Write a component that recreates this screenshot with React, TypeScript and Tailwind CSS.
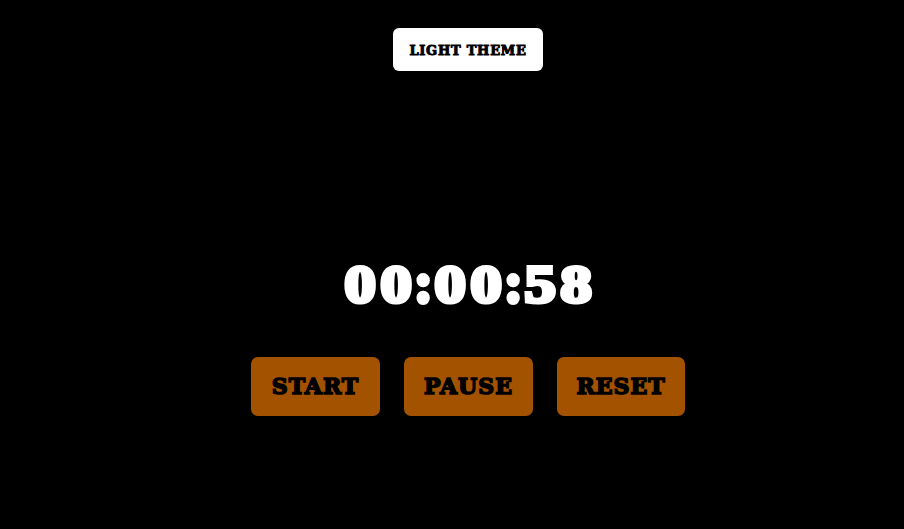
const time = '00:00:58';

function Digit({ char }: { char: string }) {
  if (char === ':') {
    return (
      <span className="flex w-[18px] justify-center text-[56px] [-webkit-text-stroke:5px_white]">
        <span className="inline-block scale-x-95">:</span>
      </span>
    );
  }
  return (
    <span className="flex w-9 justify-center text-[53px] [-webkit-text-stroke:4.2px_white]">
      <span className="inline-block scale-x-[1.18]">{char}</span>
    </span>
  );
}

function Control({ label, width }: { label: string; width: string }) {
  return (
    <button
      className={`${width} flex h-[59px] items-center justify-center rounded-[7px] bg-[#a35200] pb-px text-[22px] leading-none font-bold tracking-[1px] text-black [-webkit-text-stroke:1.6px_black]`}
    >
      {label}
    </button>
  );
}

export default function App() {
  return (
    <main className="flex h-[529px] w-[904px] flex-col items-center overflow-hidden bg-black pt-7 pl-8 font-['DejaVu_Serif',serif]">
      <button className="flex h-[43px] w-[150px] items-center justify-center rounded-md bg-white pt-0.5 text-[13px] leading-none font-bold tracking-[0.75px] whitespace-nowrap text-black [-webkit-text-stroke:0.9px_black]">
        LIGHT THEME
      </button>
      <div className="mt-[184px] flex h-14 items-baseline font-['Liberation_Serif',serif] leading-14 font-bold text-white">
        {time.split('').map((char, index) => (
          <Digit key={index} char={char} />
        ))}
      </div>
      <div className="mt-[46px] flex gap-6">
        <Control label="START" width="w-[129px]" />
        <Control label="PAUSE" width="w-[129px]" />
        <Control label="RESET" width="w-[128px]" />
      </div>
    </main>
  );
}
